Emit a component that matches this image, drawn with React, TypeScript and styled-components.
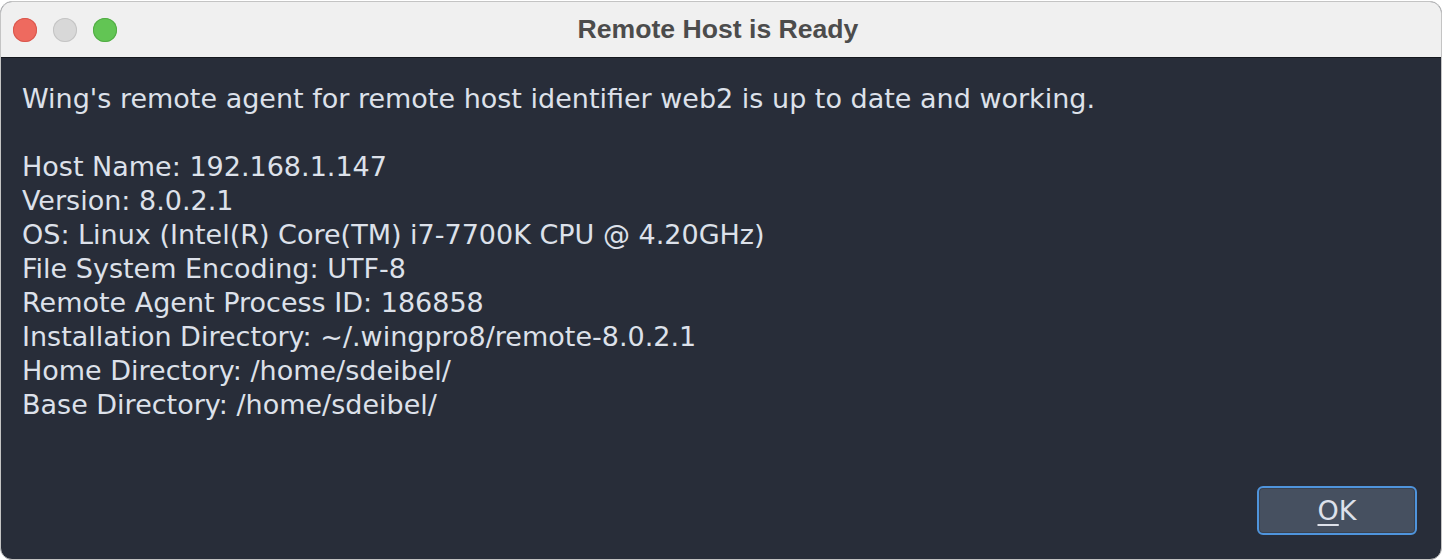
import React from 'react';
import styled, { createGlobalStyle } from 'styled-components';

const GlobalStyle = createGlobalStyle`
  html, body {
    margin: 0;
    padding: 0;
    background: #ffffff;
  }
  body {
    font-family: "DejaVu Sans", "Liberation Sans", sans-serif;
  }
`;

const Window = styled.div`
  width: 1442px;
  height: 559px;
  box-sizing: border-box;
  margin-top: 1px;
  border: 1px solid #c4c4c4;
  border-radius: 12px;
  overflow: hidden;
  display: flex;
  flex-direction: column;
  background: #282d39;
`;

const TitleBar = styled.div`
  height: 55px;
  flex-shrink: 0;
  background: #f0f0f0;
  border-bottom: 1px solid #15181e;
  display: flex;
  align-items: center;
  position: relative;
  padding-left: 12px;
  gap: 16px;
`;

const Light = styled.span<{ $fill: string; $edge: string }>`
  width: 24px;
  height: 24px;
  border-radius: 50%;
  background: ${(p) => p.$fill};
  box-shadow: inset 0 0 0 1px ${(p) => p.$edge};
`;

const Title = styled.div`
  position: absolute;
  left: 0;
  right: 6px;
  text-align: center;
  font-family: "Liberation Sans", "DejaVu Sans", sans-serif;
  font-weight: bold;
  font-size: 26.6px;
  color: #4c4c4c;
  pointer-events: none;
`;

const Body = styled.div`
  flex: 1;
  display: flex;
  flex-direction: column;
  padding: 24px 24px 24px 21px;
`;

const Message = styled.div`
  flex: 1;
  color: #dde1ea;
  font-size: 27px;
  line-height: 34px;
`;

const Line = styled.div`
  white-space: pre;
  min-height: 34px;
`;

const Footer = styled.div`
  display: flex;
  justify-content: flex-end;
`;

const Button = styled.button`
  width: 160px;
  height: 49px;
  box-sizing: border-box;
  border: 2px solid #4f94dc;
  border-radius: 6px;
  background: #465060;
  box-shadow: inset 0 0 0 1px #3a4250;
  color: #dde1ea;
  font-family: "DejaVu Sans", sans-serif;
  font-size: 27px;
  padding: 0;
  cursor: pointer;

  u {
    text-decoration-thickness: 2px;
    text-underline-offset: 4px;
  }
`;

const lines = [
  "Wing's remote agent for remote host identifier web2 is up to date and working.",
  '',
  'Host Name: 192.168.1.147',
  'Version: 8.0.2.1',
  'OS: Linux (Intel(R) Core(TM) i7-7700K CPU @ 4.20GHz)',
  'File System Encoding: UTF-8',
  'Remote Agent Process ID: 186858',
  'Installation Directory: ~/.wingpro8/remote-8.0.2.1',
  'Home Directory: /home/sdeibel/',
  'Base Directory: /home/sdeibel/',
];

export default function App() {
  return (
    <>
      <GlobalStyle />
      <Window>
        <TitleBar>
          <Light $fill="#ee6a5f" $edge="#d9584e" />
          <Light $fill="#d8d8d8" $edge="#c4c4c4" />
          <Light $fill="#62c554" $edge="#52ac45" />
          <Title>Remote Host is Ready</Title>
        </TitleBar>
        <Body>
          <Message>
            {lines.map((l, i) => (
              <Line key={i}>{l}</Line>
            ))}
          </Message>
          <Footer>
            <Button>
              <u>O</u>K
            </Button>
          </Footer>
        </Body>
      </Window>
    </>
  );
}
